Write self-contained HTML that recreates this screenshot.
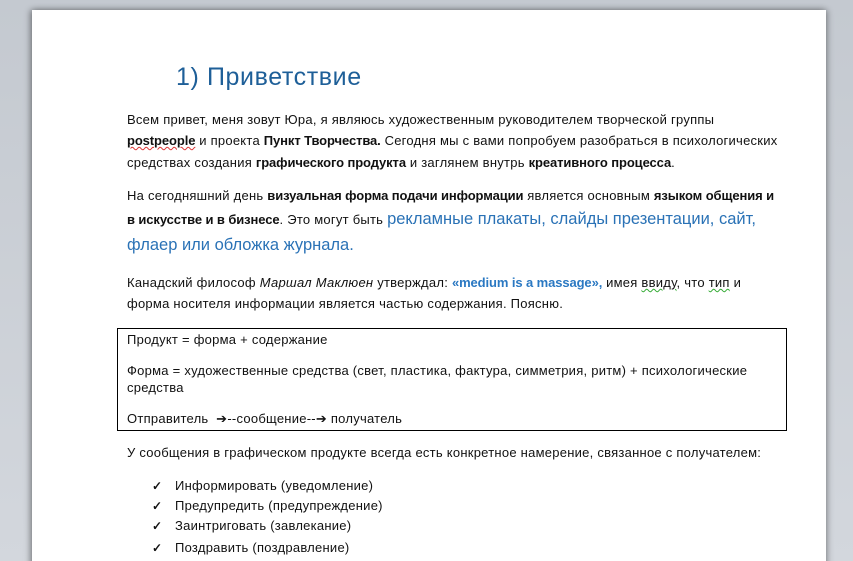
<!DOCTYPE html>
<html><head><meta charset="utf-8"><style>
html,body{margin:0;width:853px;height:561px;overflow:hidden}
body{background:linear-gradient(#c4c9d0,#d3d7dd);font-family:"Liberation Sans",sans-serif;position:relative}
.page{position:absolute;left:32px;top:10px;width:794px;height:560px;background:#fff;box-shadow:-2px 0 6px rgba(0,0,0,.35),2px 0 6px rgba(0,0,0,.25)}
.l{position:absolute;white-space:nowrap;font-size:13px;letter-spacing:0.25px;color:#111;line-height:16px}
b{font-weight:bold;letter-spacing:-0.1px}
.blue{color:#2a72b6;font-size:16.5px;letter-spacing:0px}
.q{color:#2a78c2;font-weight:bold;letter-spacing:-0.1px}
.box{position:absolute;left:117px;top:328px;width:668px;height:101px;border:1px solid #000}
.sq{text-decoration:underline wavy #d33;text-decoration-thickness:1px}
.sg{text-decoration:underline wavy #3a3;text-decoration-thickness:1px}
.ck{font-weight:bold;font-size:12px}
</style></head><body>
<div class="page"></div>
<div class="l" style="left:176px;top:62px;font-size:25px;line-height:30px;color:#1e5f98;letter-spacing:0.6px">1) Приветствие</div>
<div class="l" style="left:127px;top:112px">Всем привет, меня зовут Юра, я являюсь художественным руководителем творческой группы</div>
<div class="l" style="left:127px;top:133px"><b class="sq">postpeople</b> и проекта <b>Пункт Творчества.</b> Сегодня мы с вами попробуем разобраться в психологических</div>
<div class="l" style="left:127px;top:155px">средствах создания <b>графического продукта</b> и заглянем внутрь <b>креативного процесса</b>.</div>
<div class="l" style="left:127px;top:188px">На сегодняшний день <b>визуальная форма подачи информации</b> является основным <b>языком общения и</b></div>
<div class="l" style="left:127px;top:211px"><b>в искусстве и в бизнесе</b>. Это могут быть <span class="blue">рекламные плакаты, слайды презентации, сайт,</span></div>
<div class="l blue" style="left:127px;top:235px;line-height:20px">флаер или обложка журнала.</div>
<div class="l" style="left:127px;top:275px">Канадский философ <i>Маршал Маклюен</i> утверждал: <span class="q">«medium is a massage»,</span> имея <span class="sg">ввиду</span>, что <span class="sg">тип</span> и</div>
<div class="l" style="left:127px;top:296px">форма носителя информации является частью содержания. Поясню.</div>
<div class="box"></div>
<div class="l" style="left:127px;top:332px">Продукт = форма + содержание</div>
<div class="l" style="left:127px;top:363px">Форма = художественные средства (свет, пластика, фактура, симметрия, ритм) + психологические</div>
<div class="l" style="left:127px;top:380px">средства</div>
<div class="l" style="left:127px;top:411px">Отправитель &nbsp;➔--сообщение--➔ получатель</div>
<div class="l" style="left:127px;top:445px">У сообщения в графическом продукте всегда есть конкретное намерение, связанное с получателем:</div>
<div class="l ck" style="left:152px;top:478px">✓</div><div class="l" style="left:175px;top:478px">Информировать (уведомление)</div>
<div class="l ck" style="left:152px;top:498px">✓</div><div class="l" style="left:175px;top:498px">Предупредить (предупреждение)</div>
<div class="l ck" style="left:152px;top:518px">✓</div><div class="l" style="left:175px;top:518px">Заинтриговать (завлекание)</div>
<div class="l ck" style="left:152px;top:540px">✓</div><div class="l" style="left:175px;top:540px">Поздравить (поздравление)</div>
</body></html>
